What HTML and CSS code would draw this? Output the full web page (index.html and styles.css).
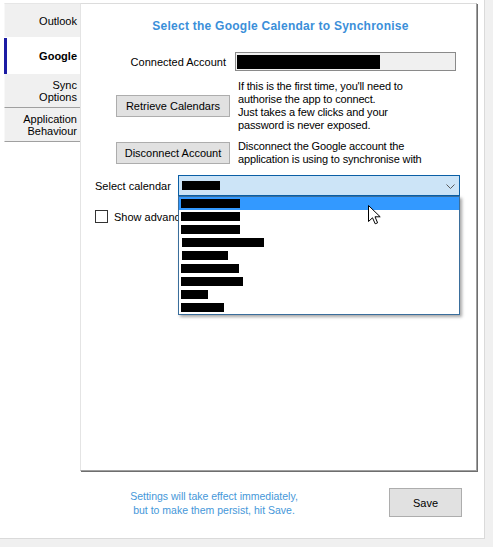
FILE: index.html
```html
<!DOCTYPE html>
<html lang="en">
<head>
<meta charset="utf-8">
<title>Settings</title>
<link rel="stylesheet" href="styles.css">
</head>
<body>
<div class="window">
  <div class="main">
    <nav class="tabs">
      <div class="tab tab-first">Outlook</div>
      <div class="tab tab-active">Google</div>
      <div class="tab tab-lined">Sync<br>Options</div>
      <div class="tab tab-lined">Application<br>Behaviour</div>
    </nav>
    <section class="panel">
      <h1 class="title">Select the Google Calendar to Synchronise</h1>

      <div class="row row-account">
        <span class="account-label">Connected Account</span>
        <div class="textbox"><span class="redacted account-value"></span></div>
      </div>

      <div class="row row-action row-retrieve">
        <button class="btn btn-action">Retrieve Calendars</button>
        <p class="hint">If this is the first time, you'll need to<br>authorise the app to connect.<br>Just takes a few clicks and your<br>password is never exposed.</p>
      </div>

      <div class="row row-action row-disconnect">
        <button class="btn btn-action">Disconnect Account</button>
        <p class="hint">Disconnect the Google account the<br>application is using to synchronise with</p>
      </div>

      <div class="row row-calendar">
        <span class="calendar-label">Select calendar</span>
        <div class="combo">
          <div class="combo-box">
            <span class="redacted combo-value"></span>
            <svg class="chevron" width="9" height="5" viewBox="0 0 9 5"><path d="M0.5 0.5 L4.5 4.5 L8.5 0.5" fill="none" stroke="#5a5a5a" stroke-width="1"/></svg>
          </div>
          <ul class="combo-list">
            <li class="item item-selected"><span class="redacted item-bar" style="width:59px"></span></li>
            <li class="item"><span class="redacted item-bar" style="width:59px"></span></li>
            <li class="item"><span class="redacted item-bar" style="width:59px"></span></li>
            <li class="item"><span class="redacted item-bar" style="width:82px;margin-left:3px"></span></li>
            <li class="item"><span class="redacted item-bar" style="width:46px;margin-left:3px"></span></li>
            <li class="item"><span class="redacted item-bar" style="width:58px"></span></li>
            <li class="item"><span class="redacted item-bar" style="width:62px"></span></li>
            <li class="item"><span class="redacted item-bar" style="width:27px"></span></li>
            <li class="item"><span class="redacted item-bar" style="width:43px"></span></li>
          </ul>
          <svg class="cursor" width="14" height="20" viewBox="0 0 14 20"><path d="M0.5 0.5 L0.5 16.5 L4.5 12.8 L7.2 18.8 L9.6 17.8 L7 11.8 L12.2 11.8 Z" fill="#fff" stroke="#000" stroke-width="1" stroke-linejoin="miter"/></svg>
        </div>
      </div>

      <div class="row row-advanced">
        <span class="checkbox"></span>
        <span class="advanced-label">Show advanced settings</span>
      </div>
    </section>
  </div>
  <footer class="footer">
    <p class="notice">Settings will take effect immediately,<br>but to make them persist, hit Save.</p>
    <button class="btn btn-save">Save</button>
  </footer>
</div>
</body>
</html>
```

FILE: styles.css
```css
html, body {
  margin: 0;
  padding: 0;
}

body {
  background: #f0f0f0;
  font-family: "Liberation Sans", Arial, sans-serif;
  font-size: 11px;
  color: #000;
}

.window {
  width: 484px;
  height: 538px;
  background: #fff;
  border-right: 1px solid #dadada;
  border-bottom: 1px solid #dadada;
}

.main {
  display: flex;
  padding: 3px 0 0 4px;
}

/* vertical tab strip */
.tabs {
  width: 76px;
  display: flex;
  flex-direction: column;
}

.tab {
  box-sizing: border-box;
  height: 34px;
  display: flex;
  align-items: center;
  justify-content: flex-end;
  text-align: right;
  padding-right: 3px;
  background: #f0f0f0;
  line-height: 12px;
  border-left: 1px solid #f8f8f8;
}

.tab-first {
  border-top: 1px solid #e6e6e6;
  padding-top: 1px;
}

.tab-active {
  background: #fff;
  font-weight: bold;
  font-size: 11px;
  border-left: 3px solid #1c1ca4;
  margin-top: 1px;
  height: 36px;
}

.tab-lined {
  border-bottom: 1px solid #a0a0a0;
}

/* page body */
.panel {
  box-sizing: border-box;
  width: 397px;
  height: 468px;
  border-top: 1px solid #dcdcdc;
  border-left: 1px solid #e4e4e4;
  border-right: 1px solid #a0a0a0;
  border-bottom: 1px solid #a0a0a0;
  box-shadow: 1px 1px 0 #6e6e6e;
  display: flex;
  flex-direction: column;
}

.title {
  margin: 15px 0 0 0;
  font-size: 12px;
  letter-spacing: 0.25px;
  line-height: 14px;
  font-weight: bold;
  color: #3b8fd9;
  text-align: center;
  padding-left: 4px;
}

.row {
  display: flex;
  align-items: center;
}

.row-account {
  margin-top: 19px;
}

.account-label {
  width: 145px;
  text-align: right;
}

.textbox {
  box-sizing: border-box;
  margin-left: 9px;
  width: 221px;
  height: 19px;
  border: 1px solid #8a8a8a;
  background: #f0f0f0;
  display: flex;
  align-items: center;
  padding-left: 1px;
}

.redacted {
  display: block;
  background: #000;
}

.account-value {
  width: 143px;
  height: 14px;
}

.row-action {
  padding-left: 35px;
}

.row-retrieve {
  margin-top: 9px;
}

.row-disconnect {
  margin-top: 8px;
}

.btn {
  box-sizing: border-box;
  background: #e1e1e1;
  border: 1px solid #adadad;
  font-family: "Liberation Sans", Arial, sans-serif;
  font-size: 11px;
  color: #000;
  padding: 0;
  margin: 0;
}

.btn-action {
  width: 114px;
  height: 22px;
}

.hint {
  margin: 0 0 0 8px;
  line-height: 13px;
  letter-spacing: -0.15px;
}

.row-calendar {
  margin-top: 9px;
  padding-left: 14px;
}

.calendar-label {
  width: 83px;
}

.combo {
  position: relative;
  width: 282px;
}

.combo-box {
  box-sizing: border-box;
  height: 21px;
  border: 1px solid #0a5fa6;
  background: #cce4f7;
  display: flex;
  align-items: center;
  justify-content: space-between;
  padding: 0 4px 0 3px;
}

.combo-value {
  width: 38px;
  height: 9px;
}

.chevron {
  display: block;
  margin-top: 1px;
}

/* open dropdown of the calendar picker */
.combo-list {
  position: absolute;
  z-index: 2;
  top: 100%;
  left: 0;
  box-sizing: border-box;
  width: 282px;
  margin: 0;
  padding: 0;
  list-style: none;
  background: #fff;
  border: 1px solid #3a6e9c;
  box-shadow: 2px 2px 3px rgba(0, 0, 0, 0.35);
}

.item {
  height: 13px;
  padding-top: 2px;
  box-sizing: border-box;
}

.item-selected {
  background: #3399ff;
}

.item-bar {
  height: 9px;
  margin-left: 2px;
}

.cursor {
  position: absolute;
  z-index: 3;
  left: 190px;
  top: 30px;
}

.row-advanced {
  margin-top: 14px;
  padding-left: 14px;
}

.checkbox {
  box-sizing: border-box;
  width: 13px;
  height: 13px;
  border: 1px solid #333;
  background: #fff;
}

.advanced-label {
  margin-left: 6px;
}

/* bottom strip */
.footer {
  display: flex;
  align-items: center;
  margin-top: 17px;
  padding-left: 114px;
}

.notice {
  margin: 0;
  width: 200px;
  text-align: center;
  line-height: 14px;
  font-size: 10.5px;
  color: #4597d9;
}

.btn-save {
  margin-left: 75px;
  width: 73px;
  height: 29px;
}
```
